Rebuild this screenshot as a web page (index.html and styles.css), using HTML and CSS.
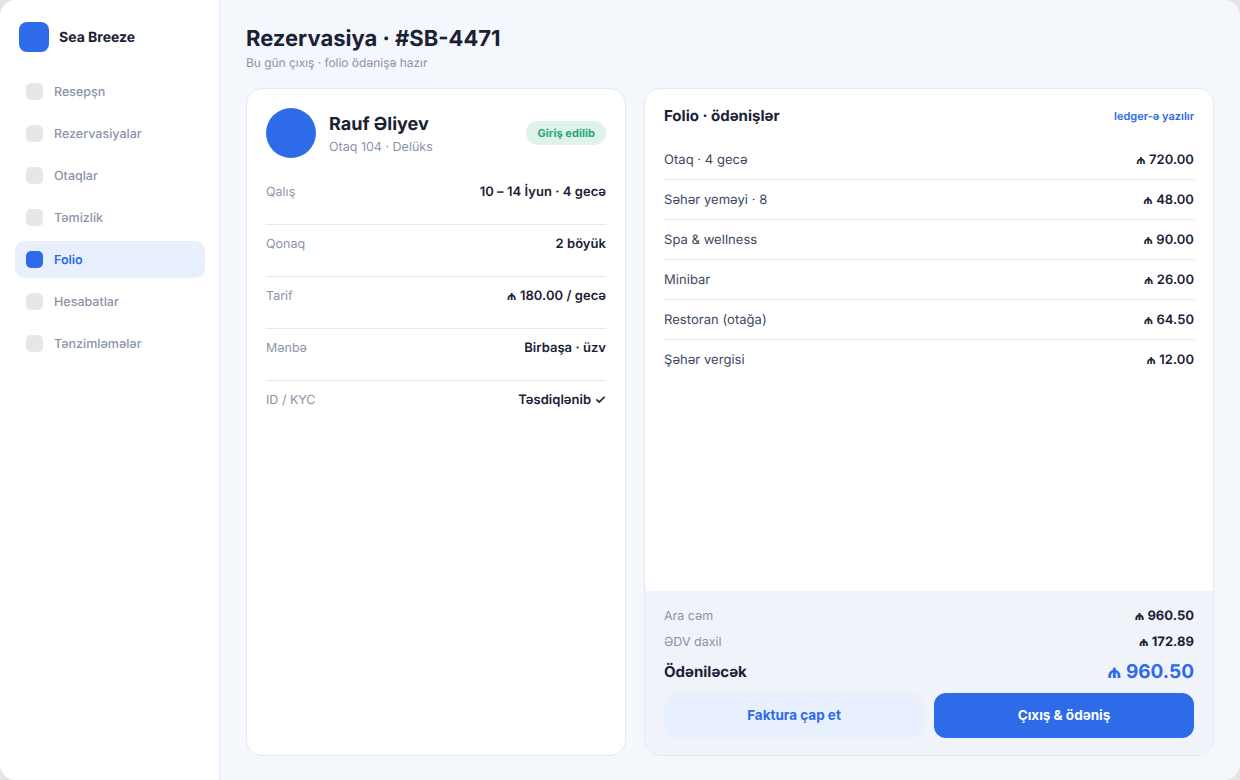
FILE: index.html
```html
<!DOCTYPE html>
<html lang="az">
<head>
    <meta charset="UTF-8">
    <meta name="viewport" content="width=device-width, initial-scale=1.0">
    <title>Sea Breeze</title>
    <link rel="stylesheet" href="styles.css">
</head>
<body>
    <div class="app">
        <aside class="sidebar">
            <div class="brand"><span class="logo"></span>Sea Breeze</div>
            <nav class="menu">
                <a class="item"><i></i>Resepşn</a>
                <a class="item"><i></i>Rezervasiyalar</a>
                <a class="item"><i></i>Otaqlar</a>
                <a class="item"><i></i>Təmizlik</a>
                <a class="item active"><i></i>Folio</a>
                <a class="item"><i></i>Hesabatlar</a>
                <a class="item"><i></i>Tənzimləmələr</a>
            </nav>
        </aside>
        <main class="main">
            <h1>Rezervasiya · #SB-4471</h1>
            <p class="sub">Bu gün çıxış · folio ödənişə hazır</p>
            <div class="columns">
                <section class="card guest">
                    <div class="guest-head">
                        <span class="avatar"></span>
                        <div class="who">
                            <h2>Rauf Əliyev</h2>
                            <p>Otaq 104 · Delüks</p>
                        </div>
                        <span class="badge">Giriş edilib</span>
                    </div>
                    <div class="info"><span>Qalış</span><b>10 – 14 İyun · 4 gecə</b></div>
                    <div class="info"><span>Qonaq</span><b>2 böyük</b></div>
                    <div class="info"><span>Tarif</span><b>₼ 180.00 / gecə</b></div>
                    <div class="info"><span>Mənbə</span><b>Birbaşa · üzv</b></div>
                    <div class="info"><span>ID / KYC</span><b>Təsdiqlənib ✓</b></div>
                </section>
                <section class="card folio">
                    <div class="folio-head"><h3>Folio · ödənişlər</h3><span>ledger-ə yazılır</span></div>
                    <div class="lines">
                        <div class="line"><span>Otaq · 4 gecə</span><b>₼ 720.00</b></div>
                        <div class="line"><span>Səhər yeməyi · 8</span><b>₼ 48.00</b></div>
                        <div class="line"><span>Spa &amp; wellness</span><b>₼ 90.00</b></div>
                        <div class="line"><span>Minibar</span><b>₼ 26.00</b></div>
                        <div class="line"><span>Restoran (otağa)</span><b>₼ 64.50</b></div>
                        <div class="line"><span>Şəhər vergisi</span><b>₼ 12.00</b></div>
                    </div>
                    <div class="summary">
                        <div class="sum"><span>Ara cəm</span><b>₼ 960.50</b></div>
                        <div class="sum"><span>ƏDV daxil</span><b>₼ 172.89</b></div>
                        <div class="total"><span>Ödəniləcək</span><b>₼ 960.50</b></div>
                        <div class="actions">
                            <button class="btn">Faktura çap et</button>
                            <button class="btn primary">Çıxış &amp; ödəniş</button>
                        </div>
                    </div>
                </section>
            </div>
        </main>
    </div>
</body>
</html>
```

FILE: styles.css
```css
* {
    box-sizing: border-box;
    margin: 0;
    padding: 0;
}
body {
    font-family: Inter, sans-serif;
    text-rendering: geometricPrecision;
    background-color: #e4e4e4;
    color: #1a2135;
    height: 100vh;
    overflow: hidden;
}
.app {
    display: flex;
    height: 100vh;
    background-color: #f4f7fc;
    border-radius: 16px;
    overflow: hidden;
}
.sidebar {
    width: 220px;
    padding: 22px 14px 0 15px;
    background-color: #fff;
    border-right: 1px solid #e4e9f1;
}
.brand {
    display: flex;
    align-items: center;
    gap: 10px;
    padding-left: 4px;
    font-size: 14px;
    font-weight: 700;
}
.logo {
    width: 30px;
    height: 30px;
    border-radius: 8px;
    background-color: #2d6be8;
}
.menu {
    display: flex;
    flex-direction: column;
    gap: 5px;
    margin-top: 21px;
}
.item {
    display: flex;
    align-items: center;
    gap: 11px;
    height: 37px;
    padding: 2px 11px 0;
    border-radius: 10px;
    font-size: 12.5px;
    line-height: 17px;
    font-weight: 500;
    color: #8a94a8;
}
.item i {
    width: 17px;
    height: 17px;
    margin-top: -2px;
    border-radius: 5px;
    background-color: #e7e7e9;
}
.item.active {
    background-color: #e8effd;
    color: #2d6be8;
    font-weight: 600;
}
.item.active i {
    background-color: #2d6be8;
}
.main {
    flex: 1;
    display: flex;
    flex-direction: column;
    padding: 25px 26px 24px;
}
h1 {
    font-size: 22px;
    line-height: 28px;
    font-weight: 700;
}
.sub {
    margin-top: 2px;
    font-size: 12px;
    line-height: 16px;
    letter-spacing: -0.04px;
    color: #8a94a8;
}
.columns {
    flex: 1;
    display: grid;
    grid-template-columns: 380px 1fr;
    gap: 18px;
    margin-top: 17px;
}
.card {
    background-color: #fff;
    border: 1px solid #e4e9f1;
    border-radius: 16px;
    overflow: hidden;
}
.guest {
    padding: 19px;
}
.guest-head {
    display: flex;
    align-items: center;
    gap: 13px;
    margin-bottom: 15px;
}
.avatar {
    width: 50px;
    height: 50px;
    border-radius: 50%;
    background-color: #2d6be8;
}
.who {
    flex: 1;
    padding-top: 2px;
}
.who h2 {
    font-size: 18px;
    line-height: 22px;
    font-weight: 700;
}
.who p {
    margin-top: 4px;
    font-size: 12.5px;
    line-height: 15px;
    color: #8a94a8;
}
.badge {
    padding: 5px 11px;
    border-radius: 12px;
    background-color: #dff3ea;
    color: #1fa971;
    font-size: 11px;
    line-height: 14px;
    font-weight: 700;
    letter-spacing: 0.05px;
}
.info {
    display: flex;
    justify-content: space-between;
    align-items: baseline;
    height: 52px;
    padding-top: 11px;
    border-bottom: 1px solid #e4e9f1;
    font-size: 12.5px;
    line-height: 16px;
    color: #8a94a8;
}
.info:last-child,
.line:last-child {
    border-bottom: none;
}
.info b {
    font-size: 13px;
    font-weight: 600;
    letter-spacing: 0.04px;
    color: #1a2135;
}
.folio {
    display: flex;
    flex-direction: column;
}
.folio-head {
    display: flex;
    justify-content: space-between;
    align-items: center;
    padding: 17px 19px 0;
}
.folio-head h3 {
    font-size: 15px;
    line-height: 19px;
    font-weight: 700;
}
.folio-head span {
    font-size: 11px;
    font-weight: 600;
    color: #2d6be8;
}
.lines {
    flex: 1;
    padding: 15px 19px 0;
}
.line {
    display: flex;
    justify-content: space-between;
    align-items: center;
    height: 40px;
    border-bottom: 1px solid #e6e8ee;
    font-size: 13px;
    letter-spacing: 0.04px;
    color: #3c4860;
}
.line b {
    font-weight: 600;
    color: #1a2135;
}
.summary {
    padding: 12px 19px 17px;
    background-color: #f0f3fa;
}
.sum,
.total {
    display: flex;
    justify-content: space-between;
    align-items: center;
}
.sum {
    height: 26px;
    font-size: 12.5px;
    color: #8a94a8;
}
.sum b {
    font-size: 13px;
    font-weight: 700;
    color: #1a2135;
}
.total {
    height: 32px;
    font-size: 15px;
    font-weight: 700;
}
.total b {
    font-size: 19px;
    font-weight: 700;
    color: #2d6be8;
}
.actions {
    display: grid;
    grid-template-columns: 1fr 1fr;
    gap: 10px;
    margin-top: 6px;
}
.btn {
    height: 45px;
    padding-bottom: 1px;
    border: none;
    border-radius: 12px;
    background-color: #e8effd;
    color: #2d6be8;
    font-family: inherit;
    font-size: 13.5px;
    font-weight: 700;
}
.btn.primary {
    background-color: #2d6be8;
    color: #fff;
}
```
